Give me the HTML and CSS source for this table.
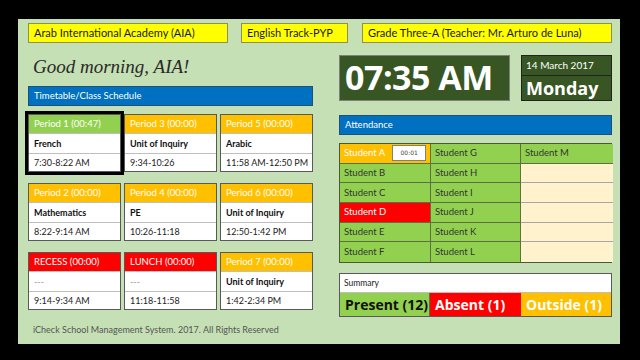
FILE: index.html
```html
<!DOCTYPE html>
<html>
<head>
<meta charset="utf-8">
<link rel="stylesheet" href="styles.css">
</head>
<body>
<div class="panel">
  <div class="topbar">
    <div class="ybox w1">Arab International Academy (AIA)</div>
    <div class="ybox w2">English Track-PYP</div>
    <div class="ybox w3">Grade Three-A (Teacher: Mr. Arturo de Luna)</div>
  </div>
  <div class="main">
    <div class="left">
      <div class="greet">Good morning, AIA!</div>
      <div class="bar">Timetable/Class Schedule</div>
      <div class="cards">
        <div class="card current"><div class="ch green">Period 1 (00:47)</div><div class="cs">French</div><div class="ct">7:30-8:22 AM</div></div>
        <div class="card"><div class="ch orange">Period 3 (00:00)</div><div class="cs">Unit of Inquiry</div><div class="ct">9:34-10:26</div></div>
        <div class="card"><div class="ch orange">Period 5 (00:00)</div><div class="cs">Arabic</div><div class="ct">11:58 AM-12:50 PM</div></div>
        <div class="card"><div class="ch orange">Period 2 (00:00)</div><div class="cs">Mathematics</div><div class="ct">8:22-9:14 AM</div></div>
        <div class="card"><div class="ch orange">Period 4 (00:00)</div><div class="cs">PE</div><div class="ct">10:26-11:18</div></div>
        <div class="card"><div class="ch orange">Period 6 (00:00)</div><div class="cs">Unit of Inquiry</div><div class="ct">12:50-1:42 PM</div></div>
        <div class="card"><div class="ch red">RECESS (00:00)</div><div class="cs dash">---</div><div class="ct">9:14-9:34 AM</div></div>
        <div class="card"><div class="ch red">LUNCH (00:00)</div><div class="cs dash">---</div><div class="ct">11:18-11:58</div></div>
        <div class="card"><div class="ch orange">Period 7 (00:00)</div><div class="cs">Unit of Inquiry</div><div class="ct">1:42-2:34 PM</div></div>
      </div>
      <div class="footer">iCheck School Management System. 2017. All Rights Reserved</div>
    </div>
    <div class="right">
      <div class="clockrow">
        <div class="clock">07:35 AM</div>
        <div class="date">
          <div class="dtop">14 March 2017</div>
          <div class="day">Monday</div>
        </div>
      </div>
      <div class="bar abar">Attendance</div>
      <div class="att">
        <div class="cell out">Student A <span class="timer">00:01</span></div>
        <div class="cell pres">Student G</div>
        <div class="cell pres">Student M</div>
        <div class="cell pres">Student B</div>
        <div class="cell pres">Student H</div>
        <div class="cell empty"></div>
        <div class="cell pres">Student C</div>
        <div class="cell pres">Student I</div>
        <div class="cell empty"></div>
        <div class="cell abs">Student D</div>
        <div class="cell pres">Student J</div>
        <div class="cell empty"></div>
        <div class="cell pres">Student E</div>
        <div class="cell pres">Student K</div>
        <div class="cell empty"></div>
        <div class="cell pres">Student F</div>
        <div class="cell pres">Student L</div>
        <div class="cell empty"></div>
      </div>
      <div class="summary">
        <div class="shead">Summary</div>
        <div class="stats">
          <div class="stat spres">Present (12)</div>
          <div class="stat sabs">Absent (1)</div>
          <div class="stat sout">Outside (1)</div>
        </div>
      </div>
    </div>
  </div>
</div>
</body>
</html>
```

FILE: styles.css
```css
* { box-sizing: border-box; }
html, body { margin: 0; padding: 0; }
body {
  background: #000;
  width: 640px;
  height: 360px;
  overflow: hidden;
  font-family: Lato, "Open Sans", sans-serif;
}
.panel {
  margin: 19px 0 0 18px;
  width: 602px;
  height: 325px;
  background: #c5e0b4;
  padding: 4px 0 0 10px;
}
.topbar {
  display: flex;
  height: 20px;
}
.ybox {
  background: #ffff00;
  border: 1px solid #8f8f52;
  font-size: 11px;
  color: #1a1a1a;
  padding-left: 5px;
  line-height: 18px;
  white-space: nowrap;
}
.w1 { width: 200px; }
.w2 { width: 107px; margin-left: 13px; }
.w3 { width: 250px; margin-left: 14px; }
.main {
  display: flex;
  gap: 26px;
}
.left { width: 285px; }
.right { width: 273px; padding-top: 12px; }
.greet {
  height: 43px;
  padding: 13px 0 0 5px;
  font-family: "Liberation Serif", serif;
  font-style: italic;
  font-size: 19px;
  color: #2a2a2a;
}
.bar {
  height: 20px;
  background: #0070c0;
  border: 1px solid #1f4e79;
  color: #fff;
  font-size: 9.5px;
  line-height: 18px;
  padding-left: 5px;
}
.cards {
  margin-top: 8px;
  display: grid;
  grid-template-columns: 93px 93px 93px;
  column-gap: 3px;
  row-gap: 11px;
}
.card {
  height: 58px;
  background: #fff;
  border: 1px solid #595959;
  display: grid;
  grid-template-rows: 19px 20px 1fr;
}
.card.current {
  outline: 3px solid #000;
  outline-offset: 0;
}
.ch {
  color: #fff;
  font-size: 9.5px;
  line-height: 18px;
  padding-left: 5px;
  border-bottom: 1px solid #bfbfbf;
  white-space: nowrap;
}
.green { background: #92d050; }
.orange { background: #ffc000; }
.red { background: #ff0000; }
.cs {
  font-size: 9px;
  font-weight: bold;
  color: #111;
  line-height: 19px;
  padding-left: 5px;
  border-bottom: 1px solid #bfbfbf;
  white-space: nowrap;
}
.cs.dash { font-weight: normal; color: #999; }
.ct {
  font-size: 9px;
  color: #222;
  line-height: 18px;
  padding-left: 5px;
  white-space: nowrap;
}
.footer {
  margin-top: 14px;
  padding-left: 5px;
  font-size: 9px;
  color: #555;
}
.clockrow {
  display: flex;
  gap: 11px;
  height: 46px;
}
.clock {
  width: 171px;
  background: #375623;
  border: 1px solid #7f7f7f;
  color: #fff;
  font-family: "Open Sans", sans-serif;
  font-weight: bold;
  font-size: 34px;
  line-height: 42px;
  padding-left: 5px;
  letter-spacing: -0.5px;
  white-space: nowrap;
}
.date {
  width: 91px;
  background: #375623;
  border: 1px solid #222;
  color: #fff;
  display: flex;
  flex-direction: column;
}
.dtop {
  height: 20px;
  font-size: 10px;
  line-height: 19px;
  padding-left: 4px;
  border-bottom: 1px solid #222;
  white-space: nowrap;
}
.day {
  flex: 1;
  font-family: "Open Sans", sans-serif;
  font-weight: bold;
  font-size: 18px;
  line-height: 24px;
  padding-left: 4px;
}
.abar { margin-top: 14px; }
.att {
  margin-top: 8px;
  display: grid;
  grid-template-columns: 91px 90px 92px;
  grid-auto-rows: 19.67px;
  border: 1px solid #4a5a30;
}
.cell {
  font-size: 9.5px;
  line-height: 18px;
  padding-left: 4px;
  border-bottom: 1px solid #5e6f45;
  border-right: 1px solid #5e6f45;
  color: #333;
  white-space: nowrap;
  display: flex;
  align-items: center;
}
.cell:nth-child(3n) { border-right: none; }
.cell:nth-last-child(-n+3) { border-bottom: none; }
.pres { background: #92d050; }
.out { background: #ffc000; color: #fff; }
.abs { background: #ff0000; color: #fff; }
.empty { background: #fff2cc; border-bottom-color: #a6a6a6; }
.timer {
  margin-left: 7px;
  width: 34px;
  height: 16px;
  background: #fff;
  border: 1px solid #7f7f7f;
  color: #444;
  font-family: "DejaVu Sans", sans-serif;
  font-size: 6px;
  line-height: 14px;
  text-align: center;
}
.summary {
  margin-top: 10px;
  border: 1px solid #595959;
}
.shead {
  height: 19px;
  background: #fff;
  font-size: 8.5px;
  line-height: 19px;
  padding-left: 4px;
  color: #222;
  border-bottom: 1px solid #bfbfbf;
}
.stats {
  display: grid;
  grid-template-columns: 90px 91px 90px;
  height: 23px;
}
.stat {
  font-family: "Open Sans", sans-serif;
  font-weight: bold;
  font-size: 14px;
  line-height: 23px;
  padding-left: 5px;
  white-space: nowrap;
}
.spres { background: #92d050; color: #111; border-right: 1px solid #5e6f45; }
.sabs { background: #ff0000; color: #fff; }
.sout { background: #ffc000; color: #fff; }
```
